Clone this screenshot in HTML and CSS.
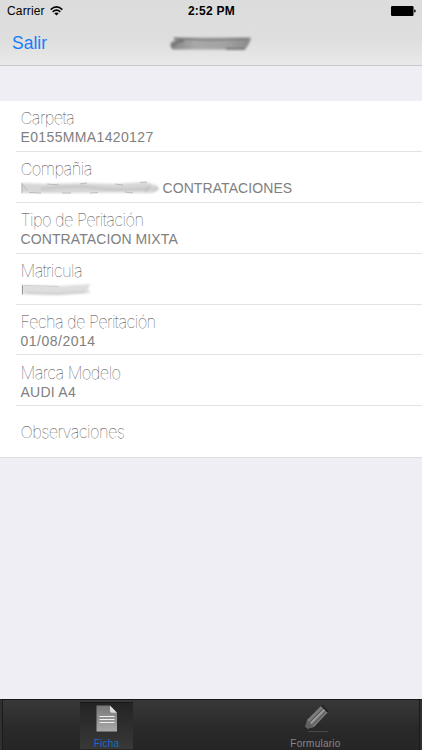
FILE: index.html
```
<!DOCTYPE html>
<html lang="es">

<head>
    <meta charset="UTF-8">
    <meta name="viewport" content="width=device-width, initial-scale=1.0">
    <title>Ficha</title>
    <link rel="stylesheet" href="styles.css">
</head>

<body>
    <div class="screen">
        <header class="header">
            <div class="status-bar">
                <div class="carrier">
                    <span>Carrier</span>
                    <svg class="wifi" width="13" height="10" viewBox="0 0 13 10" fill="none" stroke="#000" stroke-width="1.6">
                        <path d="M0.7 3.6Q6.5 -1.8 12.3 3.6" />
                        <path d="M2.7 5.8Q6.5 2.4 10.3 5.8" />
                        <path d="M4.3 7.3Q6.5 5.7 8.7 7.3L6.5 9.5Z" fill="#000" stroke="none" />
                    </svg>
                </div>
                <span class="time">2:52 PM</span>
                <svg class="battery" width="25" height="10" viewBox="0 0 25 10">
                    <rect x="0" y="0" width="22.5" height="10" rx="1.2" />
                    <path d="M23.2 3.3Q24.8 3.7 24.8 5T23.2 6.7Z" />
                </svg>
            </div>
            <div class="nav-bar">
                <a class="back">Salir</a>
                <svg class="nav-title" width="86" height="18" viewBox="0 0 86 18">
                    <defs>
                        <linearGradient id="smudge" x1="0" x2="1" y1="0" y2="0">
                            <stop offset="0" stop-color="#858585" />
                            <stop offset="0.3" stop-color="#a8a8a8" />
                            <stop offset="0.65" stop-color="#a4a4a4" />
                            <stop offset="1" stop-color="#8a8a8a" />
                        </linearGradient>
                        <filter id="soft" x="-10%" y="-30%" width="120%" height="160%">
                            <feGaussianBlur stdDeviation="0.8" />
                        </filter>
                    </defs>
                    <g filter="url(#soft)">
                        <path d="M5 2.5L83 2.5Q82 8.5 77 14.5L5 14.5Q1 12.5 3 7.5L8 4.5Z" fill="url(#smudge)" />
                        <path d="M6 3.5L38 4.9L80 4.1" fill="none" stroke="#707070" stroke-width="1.3" />
                        <path d="M4 11.5Q8 6.5 16 5.5" fill="none" stroke="#787878" stroke-width="3" />
                        <path d="M58 13.8L77 14" stroke="#555" stroke-width="1.2" />
                    </g>
                </svg>
            </div>
        </header>

        <main class="content">
            <ul class="list">
                <li class="row">
                    <span class="label">Carpeta</span>
                    <span class="value v-code">E0155MMA1420127</span>
                </li>
                <li class="row">
                    <span class="label">Compañia</span>
                    <span class="value v-company">
                        <svg class="redacted" width="139" height="14" viewBox="0 0 139 14">
                            <g filter="url(#soft)">
                                <path d="M0 2L26 3L60 2L95 3L125 1L137 5L138 9L130 12L90 11.5L50 12L0 12Z" fill="#d6d6d6" />
                                <path d="M20 8Q55 4 75 7T130 7" fill="none" stroke="#c4c4c4" stroke-width="2" />
                                <path d="M124 11L129 5M132 11L136 7" stroke="#bbb" stroke-width="1.5" />
                            </g>
                            <path d="M1 2V12M1 3L6 9M8 11.5L20 12M26 3L38 4M41 12L50 12M59 3L66 2M69 12L77 11.5M94 3L102 4M104 11L112 12M119 1.5L126 1" fill="none" stroke="#b0b0b0" stroke-width="0.8" />
                        </svg>
                        <span>CONTRATACIONES</span>
                    </span>
                </li>
                <li class="row">
                    <span class="label">Tipo de Peritación</span>
                    <span class="value v-type">CONTRATACION MIXTA</span>
                </li>
                <li class="row">
                    <span class="label">Matricula</span>
                    <span class="value">
                        <svg class="redacted" width="72" height="14" viewBox="0 0 72 14">
                            <g filter="url(#soft)">
                                <path d="M1 2L40 3L69 1L67 7L70 10L38 12L1 11Z" fill="#dedede" />
                                <path d="M5 10L35 11L64 9" fill="none" stroke="#cccccc" stroke-width="2" />
                            </g>
                            <path d="M1.5 2V11.5" stroke="#999" stroke-width="1" />
                            <path d="M3 2.5L38 3.5" stroke="#c8c8c8" stroke-width="0.8" />
                        </svg>
                    </span>
                </li>
                <li class="row">
                    <span class="label">Fecha de Peritación</span>
                    <span class="value v-date">01/08/2014</span>
                </li>
                <li class="row">
                    <span class="label">Marca Modelo</span>
                    <span class="value v-model">AUDI A4</span>
                </li>
                <li class="row">
                    <span class="label">Observaciones</span>
                </li>
            </ul>
        </main>

        <nav class="tab-bar">
            <a class="tab active">
                <svg class="tab-icon" width="22" height="27" viewBox="0 0 22 27">
                    <defs>
                        <linearGradient id="page" x1="0" x2="0" y1="0" y2="1">
                            <stop offset="0" stop-color="#777" />
                            <stop offset="1" stop-color="#aaa" />
                        </linearGradient>
                    </defs>
                    <path d="M0.5 0.5H13.5L21 8V26.5H0.5Z" fill="url(#page)" />
                    <path d="M14 0.5L21 7.8H16Q14 7.8 14 6Z" fill="#ddd" />
                    <path d="M3.5 11.5H18.5M3.5 14.5H18.5M3.5 17.5H18.5" stroke="#eee" stroke-width="1.1" />
                </svg>
                <span class="tab-label">Ficha</span>
            </a>
            <a class="tab">
                <svg class="tab-icon" width="26" height="28" viewBox="0 0 26 28">
                    <path d="M4 15L18.5 0.5L25 7L11 22L5 23Z" fill="#7c7c7c" />
                    <path d="M6.2 17.5L20.7 3M9.2 20.5L23.3 5.8" stroke="#4c4c4c" stroke-width="1" />
                    <path d="M7.7 18.2L21.5 4.5" stroke="#a2a2a2" stroke-width="1.2" />
                    <path d="M18.5 0.5L25 7" stroke="#1c1c1c" stroke-width="1.6" />
                    <path d="M4 15L11 22L1 25Z" fill="#606060" />
                    <path d="M2 21.8L4.2 24L1 25Z" fill="#171717" />
                    <path d="M5 26.5H25" stroke="#484848" stroke-width="1" />
                </svg>
                <span class="tab-label">Formulario</span>
            </a>
        </nav>
    </div>
</body>

</html>
```

FILE: styles.css
```
* {
    box-sizing: border-box;
}

body {
    margin: 0;
    font-family: "Liberation Sans", Arial, sans-serif;
    background-color: #efeef4;
}

.screen {
    display: flex;
    flex-direction: column;
    height: 750px;
}

.header {
    height: 66px;
    background: linear-gradient(#dcdcdc, #dedede 60%, #e9e9e9);
    border-bottom: 1px solid #c8c8cb;
}

.status-bar {
    display: grid;
    grid-template-columns: 1fr auto 1fr;
    align-items: center;
    height: 22px;
    padding: 0 6px 0 7px;
    font-size: 12px;
}

.carrier {
    display: flex;
    align-items: center;
    gap: 5px;
    letter-spacing: 0.15px;
}

.time {
    font-weight: bold;
    letter-spacing: 0.25px;
}

.battery {
    justify-self: end;
}

.nav-bar {
    display: grid;
    grid-template-columns: 1fr auto 1fr;
    align-items: center;
    height: 43px;
    padding: 0 12px;
}

.back {
    color: #157efb;
    font-size: 17.5px;
}

.content {
    flex: 1;
    padding-top: 35px;
}

.list {
    margin: 0;
    padding: 0;
    list-style: none;
    background-color: #fff;
    border-bottom: 1px solid #dddde0;
}

.row {
    display: flex;
    flex-direction: column;
    justify-content: center;
    height: 50.9px;
    margin-left: 16px;
    padding: 3px 0 0 4.5px;
    border-bottom: 1px solid #e3e3e5;
}

.row:last-child {
    padding-top: 1px;
    border-bottom: none;
}

.label {
    font-family: Inter, Roboto, sans-serif;
    font-weight: 100;
    font-size: 16.5px;
    line-height: 20px;
    letter-spacing: -0.6px;
    color: #444;
}

.value {
    display: flex;
    align-items: center;
    gap: 3px;
    height: 18px;
    font-size: 14px;
    color: #808080;
}

.v-code {
    letter-spacing: 0.36px;
}

.v-company {
    letter-spacing: 0.08px;
}

.v-type {
    letter-spacing: 0.1px;
}

.v-date {
    letter-spacing: 0.5px;
}

.v-model {
    letter-spacing: 0.25px;
}

.tab-bar {
    display: flex;
    height: 51px;
    background: linear-gradient(#383838, #292929 60%, #252525);
    border-top: 1px solid #161616;
    border-left: 2px solid #303030;
    border-right: 2px solid #303030;
    box-shadow: inset 1px 0 #1a1a1a, inset -1px 0 #1a1a1a;
}

.tab {
    display: flex;
    flex-direction: column;
    align-items: center;
    justify-content: space-between;
    width: 53px;
    height: 47px;
    margin: 2px auto 0;
    padding-top: 3px;
    color: #888;
}

.tab.active {
    padding-top: 2px;
    color: #176cc9;
    background: linear-gradient(#242424, #383838);
    border-top: 1px solid #181818;
}

.tab-label {
    font-size: 10px;
    line-height: 11px;
    letter-spacing: 0.25px;
}
```
